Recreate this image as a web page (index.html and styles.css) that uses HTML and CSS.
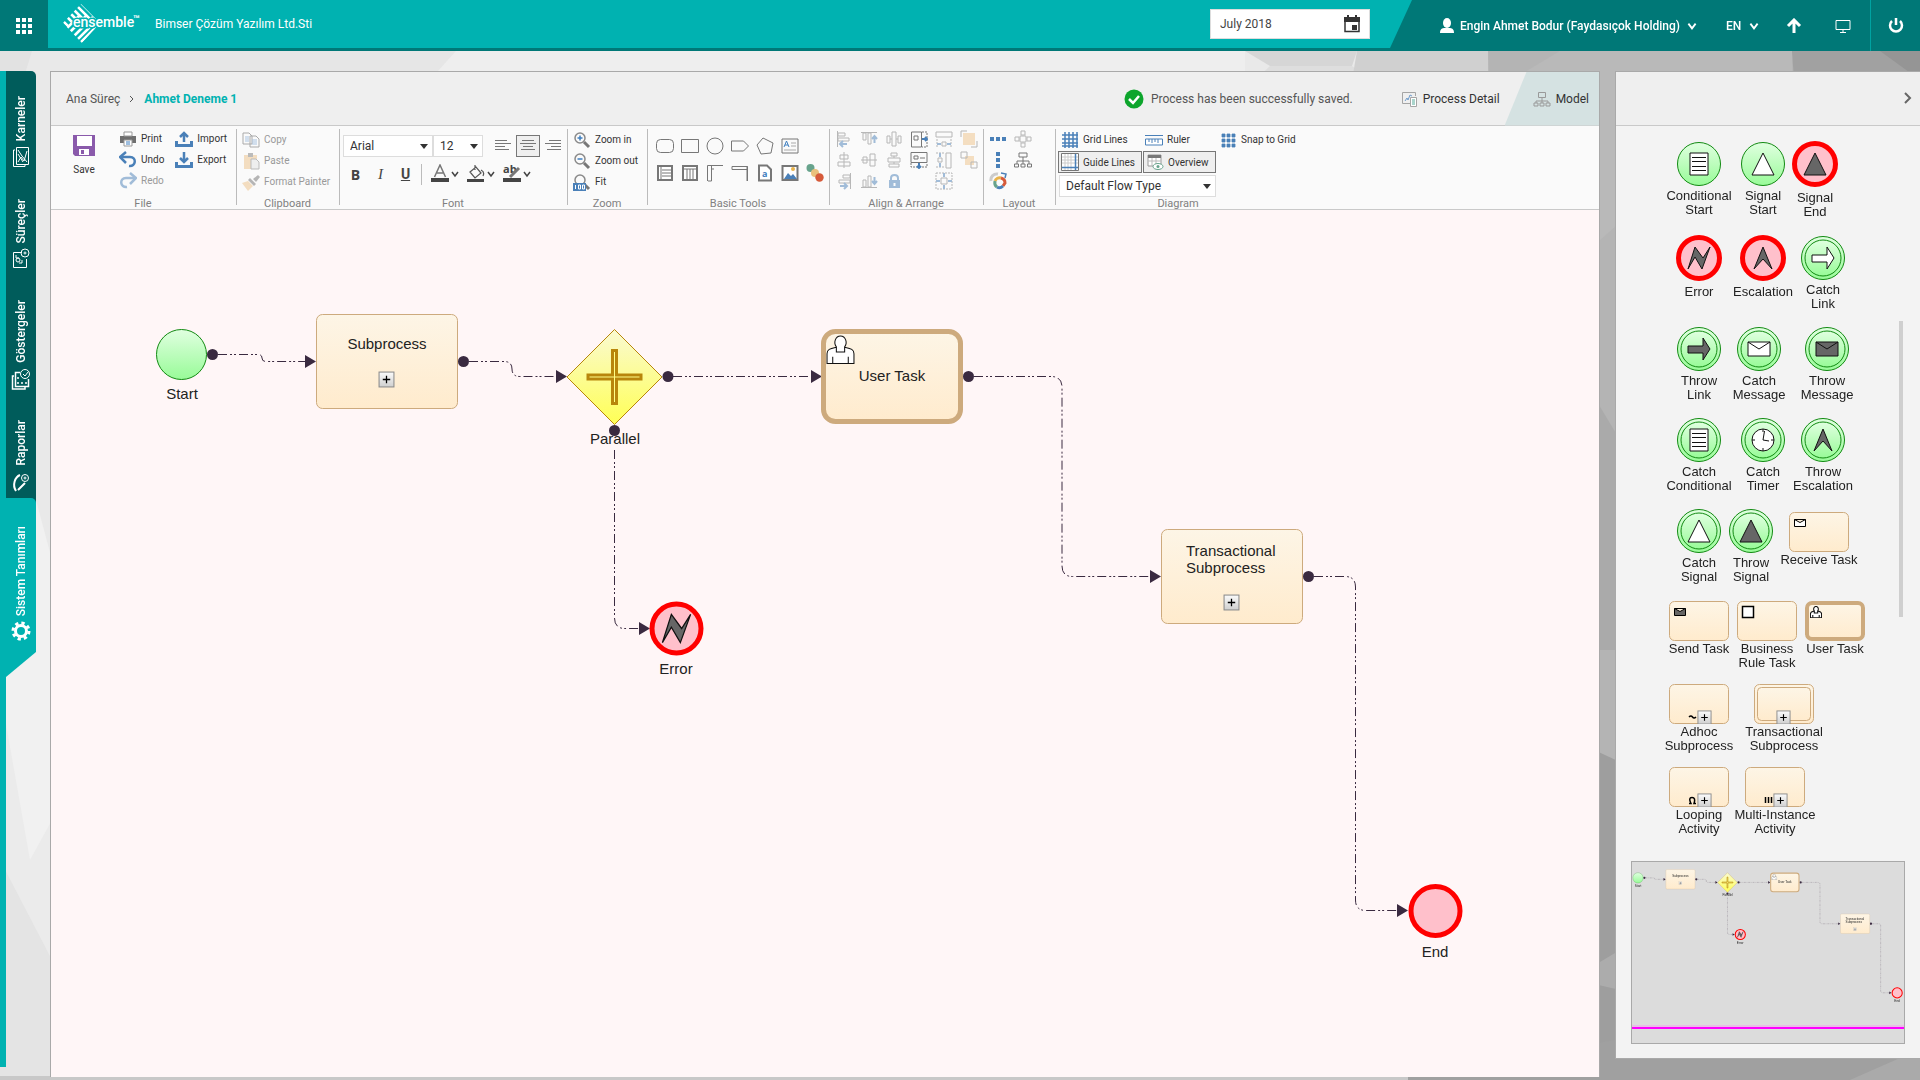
FILE: index.html
```html
<!DOCTYPE html>
<html lang="en">
<head>
    <meta charset="UTF-8">
    <meta name="viewport" content="width=device-width, initial-scale=1.0">
    <title>Ahmet Deneme 1 - Model</title>
    <link rel="stylesheet" href="styles.css">
</head>
<body>

    <!-- low poly backdrop -->
    <svg class="backdrop" viewBox="0 0 1920 1080" preserveAspectRatio="none" aria-hidden="true">
        <rect width="1920" height="1080" fill="#e9e9e9"/>
        <path d="M0 51H32L20 90 0 100z" fill="#e2e2e2"/>
        <path d="M160 51H456L430 80H160z" fill="#e6e6e6"/>
        <path d="M456 51H1245V80H430z" fill="#eeeeee"/>
        <path d="M36 500L52 560V1080H0V640z" fill="#f1f1f1"/>
        <path d="M0 690L30 860 52 820V1080H0z" fill="#ebebeb"/>
        <path d="M0 860L52 960V1080H0z" fill="#e4e4e4"/>
        <path d="M1245 51H1357L1352 66 1270 66z" fill="#d6d6d6"/>
        <path d="M1270 66H1352L1370 80H1255z" fill="#dedede"/>
        <path d="M1357 51H1488L1492 80H1352z" fill="#d0d0d0"/>
        <path d="M1488 51H1920V1080H1500z" fill="#b4b4b4"/>
        <path d="M1560 51H1792V71L1600 240 1525 72z" fill="#b9b9b9"/>
        <path d="M1792 51H1920V80H1794z" fill="#a1a1a1"/>
        <path d="M1880 51H1920V80z" fill="#959595"/>
        <path d="M1590 390L1620 440V650H1590z" fill="#aaaaaa"/>
        <path d="M1590 748L1620 762V1080H1590z" fill="#9e9e9e"/>
        <path d="M1590 968L1620 950V990L1590 983z" fill="#acacac"/>
        <path d="M0 1076H1408V1080H0z" fill="#c8c8c8"/>
        <path d="M1408 1076L1615 1040H1920V1080H1408z" fill="#a0a0a0"/>
        <path d="M1850 1080L1900 1058H1920V1080z" fill="#aaaaaa"/>
    </svg>

    <!-- shared symbols -->
    <svg class="sprite" aria-hidden="true">
        <defs>
            <linearGradient id="green" x1="0" y1="0" x2="0" y2="1"><stop offset="0" stop-color="#e0ffe0"/><stop offset="1" stop-color="#98fb98"/></linearGradient>
            <linearGradient id="cream" x1="0" y1="0" x2="0" y2="1"><stop offset="0" stop-color="#fdf5e6"/><stop offset="1" stop-color="#ffebcd"/></linearGradient>
            <linearGradient id="yellow" x1="0" y1="0" x2="0" y2="1"><stop offset="0" stop-color="#fafad2"/><stop offset="1" stop-color="#ffff55"/></linearGradient>
            <linearGradient id="silver" x1="0" y1="0" x2="0" y2="1"><stop offset="0" stop-color="#fbfbfb"/><stop offset="1" stop-color="#cfcfcf"/></linearGradient>
            <clipPath id="diamond"><path d="M18 0L37 19 19 39 0 19z"/></clipPath>
        </defs>

        <symbol id="chevron" viewBox="0 0 10 10"><path d="M2 3l3 4 3-4" fill="none" stroke="currentColor" stroke-width="1.500"/></symbol>

        <symbol id="start" viewBox="0 0 46 46"><circle cx="23" cy="23" r="21.5" class="ring"/></symbol>
        <symbol id="middle" viewBox="0 0 46 46"><circle cx="23" cy="23" r="21.5" class="ring"/><circle cx="23" cy="23" r="18" class="ring"/></symbol>
        <symbol id="end" viewBox="0 0 46 46"><circle cx="23" cy="23" r="20.5" class="ring-end"/></symbol>
        <symbol id="g-page" viewBox="0 0 46 46"><path d="M14 12h18v22H14z"/><path d="M16 16.500h14M16 20.500h14M16 25.500h14M16 29.500h14"/></symbol>
        <symbol id="g-triangle" viewBox="0 0 46 46"><path d="M23 12l11 22H12z"/></symbol>
        <symbol id="g-bolt" viewBox="0 0 46 46"><path d="M12 34l7-22 8 11 7-11-8 22-7-12z"/></symbol>
        <symbol id="g-escalation" viewBox="0 0 46 46"><path d="M23 12l9 22-9-10-9 10z"/></symbol>
        <symbol id="g-arrow" viewBox="0 0 46 46"><path d="M12 20h15v-8l7 11-7 11v-7H12z"/></symbol>
        <symbol id="g-mail" viewBox="0 0 46 46"><path d="M12 16h22v14H12z"/><path d="M12 16l11 7 11-7" fill="none"/></symbol>
        <symbol id="g-clock" viewBox="0 0 46 46"><circle cx="23" cy="23" r="11"/><path d="M23 12v3M23 31v3M12 23h3M31 23h3M24.500 14L23 23l6 1" fill="none"/></symbol>
        <symbol id="box" viewBox="0 0 60 40"><rect x=".5" y=".5" width="59" height="39" rx="5" class="task"/></symbol>
        <symbol id="person" viewBox="0 0 28 28"><path d="M9 12C4 13 1 14 1 18V27.500H27V18c0-4-3-5-8-6z"/><path d="M10 16.500h8v-5c3-4 1-10.500-4-10.500s-7 6.500-4 10.500z"/><path d="M6.500 21v6M21.500 21v6" fill="none"/></symbol>
        <symbol id="plus" viewBox="0 0 16 16"><rect x="1" y="1" width="14" height="14" fill="url(#silver)" stroke="#8c8c8c"/><path d="M8 4.500v7M4.500 8h7" stroke="#000" stroke-width="1.200"/></symbol>

        <symbol id="save" viewBox="0 0 22 22"><path d="M0 1h22v21H2l-2-2z" fill="#8a5aab"/><path d="M4 2h15v10H4zM6 15h10v6H6z" fill="#fff"/><path d="M8 16h3v4H8z" fill="#8a5aab"/></symbol>
        <symbol id="print" viewBox="0 0 18 18"><path d="M1 6h16v7H1z" fill="#6f6f6f"/><path d="M5 2h8v4H5zM5 10h8v6H5z" fill="#fff" stroke="#9a9a9a"/><path d="M7 12h4M7 14h4" stroke="#3f7fc0"/></symbol>
        <symbol id="undo" viewBox="0 0 18 18"><path d="M2 6h9c7 0 6 10-1 9" fill="none" stroke="#4a80b8" stroke-width="2.500"/><path d="M7 1L1 6l6 6" fill="none" stroke="#4a80b8" stroke-width="2.500"/></symbol>
        <symbol id="import" viewBox="0 0 18 18"><path d="M1.500 11v4.500h15V11" fill="none" stroke="#4a80b8" stroke-width="3"/><path d="M9 12V3M5 7l4-4 4 4" fill="none" stroke="#4a80b8" stroke-width="2.500"/></symbol>
        <symbol id="export" viewBox="0 0 18 18"><path d="M1.500 11v4.500h15V11" fill="none" stroke="#4a80b8" stroke-width="3"/><path d="M9 1v10M5 7l4 4 4-4" fill="none" stroke="#4a80b8" stroke-width="2.500"/></symbol>
        <symbol id="copy" viewBox="0 0 18 18"><path d="M1 2h6l3 3v8H1zM8 5h6l3 3v8H8z" fill="#fafafa" stroke="#aaa"/><path d="M3 6h4M3 8h4M3 10h4M10 9h5M10 11h5M10 13h5" stroke="#a9c3e0"/></symbol>
        <symbol id="paste" viewBox="0 0 18 18"><path d="M2 3h13v14H2z" fill="#f3ddc0"/><path d="M6 1h5v4H6z" fill="#bbb"/><path d="M9 7h5l3 3v7H9z" fill="#eee" stroke="#bbb"/></symbol>
        <symbol id="painter" viewBox="0 0 18 18"><path d="M0 10l6-2 5 5-5 5z" fill="#f3ddc0"/><path d="M6 7l2-2 6 6-2 2z" fill="#b5b5b5"/><path d="M11 6l5-4 2 2-4 5z" fill="#b5b5b5"/></symbol>
        <symbol id="lens" viewBox="0 0 18 18"><circle cx="7" cy="7" r="5" fill="none" stroke="#8a8a8a" stroke-width="1.500"/><path d="M11 11l5 5" stroke="#777" stroke-width="3"/></symbol>
    </svg>

    <header class="topbar">
        <button class="apps-btn" aria-label="Applications">
            <svg width="18" height="18" fill="#fff"><path d="M1 1h4v4H1zM7 1h4v4H7zM13 1h4v4h-4zM1 7h4v4H1zM7 7h4v4H7zM13 7h4v4h-4zM1 13h4v4H1zM7 13h4v4H7zM13 13h4v4h-4z"/></svg>
        </button>
        <a class="logo" href="#" aria-label="ensemble">
            <svg width="80" height="40">
                <g clip-path="url(#diamond)" stroke="#fff" stroke-width="2.500" fill="none">
                    <path d="M-4 13l24 24M0 9l24 24M3 5l24 24M7 2l24 24M10-2l24 24M14-5l24 24M18-8l24 24"/>
                </g>
                <g clip-path="url(#diamond)"><path d="M2 22h40v17H2z" fill="#00b2b1"/><path d="M0 28l16-16M3 32L23 12M7 36L30 13M11 39L36 14M14 42L40 16M18 46L44 20" stroke="#fff" stroke-width="2.500"/></g>
                <text x="10" y="23" class="logo-text">ensemble</text>
                <text x="70" y="19" class="logo-tm">™</text>
            </svg>
        </a>
        <span class="company">Bimser Çözüm Yazılım Ltd.Sti</span>
        <div class="date-box">
            <input type="text" value="July 2018" aria-label="Period">
            <button aria-label="Open calendar"><svg width="18" height="18"><path d="M2 3h14v13.500H2z" fill="none" stroke="#333" stroke-width="1.500"/><path d="M1 2h16v5H1zM4 0h2v3H4zM12 0h2v3h-2zM9 10h5v5H9z" fill="#333"/></svg></button>
        </div>
        <nav class="user-nav">
            <a href="#" class="user-link">
                <svg width="14" height="16" fill="#fff"><ellipse cx="7" cy="5" rx="4" ry="5"/><path d="M0 15c0-4 2-5 5-5h4c3 0 5 1 5 5z"/></svg>
                Engin Ahmet Bodur (Faydasıçok Holding)
                <svg width="12" height="12"><use href="#chevron"/></svg>
            </a>
            <a href="#" class="lang-link">EN <svg width="12" height="12"><use href="#chevron"/></svg></a>
            <a href="#" class="icon-link" aria-label="Upload"><svg width="16" height="16"><path d="M8 15V3M2 8l6-6 6 6" fill="none" stroke="#fff" stroke-width="3"/></svg></a>
            <a href="#" class="icon-link" aria-label="Screen"><svg width="16" height="16"><path d="M1 2.500h14v9H1zM8 12v2M5 14.500h6" fill="none" stroke="#fff"/></svg></a>
            <a href="#" class="power-link" aria-label="Log out"><svg width="18" height="18"><path d="M5 4a6 6 0 1 0 8 0M9 1v7" fill="none" stroke="#fff" stroke-width="2.500"/></svg></a>
        </nav>
    </header>

    <div class="page">
        <nav class="side">
            <a href="#" class="side-tab tab-kar"><span>Karneler</span>
                <svg width="18" height="22" fill="none" stroke="#fff"><path d="M4.500 1.500h12v17h-12zM3 4H1.500v16.500H13V19M6 16l3-5 3 4 3-10M6 4l4 6 5 6M6 8l5 8"/></svg></a>
            <a href="#" class="side-tab tab-sur"><span>Süreçler</span>
                <svg width="18" height="22" fill="none" stroke="#fff"><path d="M10 4.500H1.500v15h13V11M4 7v3h3M7 15h3v-3"/><circle cx="6" cy="12" r="2"/><circle cx="13" cy="5" r="4"/><circle cx="13" cy="5" r="1"/></svg></a>
            <a href="#" class="side-tab tab-gos"><span>Göstergeler</span>
                <svg width="20" height="22" fill="none" stroke="#fff"><path d="M9 4.500H4.500v14h13V11M3 8H1.500v13H14v-2M7 9v2M7 14v2M10 15h2M14 15h2" stroke-width="1.500"/><circle cx="14" cy="6" r="4.500"/><path d="M12 6l2 2 3-4"/></svg></a>
            <a href="#" class="side-tab tab-rap"><span>Raporlar</span>
                <svg width="18" height="22" fill="none" stroke="#fff"><path d="M4 20C0 14 3 6 8 4M6 19l7-7" stroke-width="2"/><circle cx="13" cy="7" r="3.500"/><circle cx="13" cy="7" r="1"/></svg></a>
            <a href="#" class="side-tab tab-sis"><span>Sistem Tanımları</span>
                <svg width="20" height="20"><circle cx="10" cy="10" r="8" fill="none" stroke="#fff" stroke-width="3" stroke-dasharray="3.300 3"/><circle cx="10" cy="10" r="5.500" fill="none" stroke="#fff" stroke-width="3"/></svg></a>
        </nav>

        <main class="workspace">
            <div class="panel-head">
                <a href="#" class="crumb">Ana Süreç</a>
                <svg class="crumb-sep" width="8" height="10"><path d="M2 2l3 3-3 3" fill="none" stroke="#555"/></svg>
                <b class="crumb-current">Ahmet Deneme 1</b>
                <span class="saved">
                    <svg width="20" height="20"><circle cx="10" cy="10" r="9.500" fill="#0da52c"/><path d="M5 10l4 4 6-7" fill="none" stroke="#fff" stroke-width="2.500"/></svg>
                    Process has been successfully saved.
                </span>
                <a href="#" class="head-tab">
                    <svg width="16" height="16" fill="none" stroke="#a5a5a5"><path d="M9 12.500H.500V1.500h13V5"/><path d="M8.500 6.500h6v9h-6z" fill="#fff"/><path d="M3 10l2-3 1 2 2-5 2 1" stroke="#6f9ccc"/><path d="M10 9h3M10 11h3M10 13h3" stroke="#5a9"/></svg>
                    Process Detail
                </a>
                <a href="#" class="head-tab head-tab-on">
                    <svg width="18" height="16" fill="none" stroke="#999"><path d="M5.500 1.500h7v5h-7zM9 7v3M3 12v-2h12v2M9 10v2M1 12h4v3H1zM7 12h4v3H7zM13 12h4v3h-4z"/></svg>
                    Model
                </a>
            </div>

            <div class="toolbar">
                <section class="group">
                    <div class="group-body group-file">
                        <button class="save-btn"><svg width="22" height="22"><use href="#save"/></svg>Save</button>
                        <div class="cmds">
                            <button class="cmd"><svg><use href="#print"/></svg>Print</button>
                            <button class="cmd"><svg><use href="#undo"/></svg>Undo</button>
                            <button class="cmd off"><svg class="flip"><use href="#undo"/></svg>Redo</button>
                        </div>
                        <div class="cmds">
                            <button class="cmd"><svg><use href="#import"/></svg>Import</button>
                            <button class="cmd"><svg><use href="#export"/></svg>Export</button>
                        </div>
                    </div>
                    <h2>File</h2>
                </section>

                <section class="group">
                    <div class="group-body cmds group-clip">
                        <button class="cmd faint" disabled><svg><use href="#copy"/></svg>Copy</button>
                        <button class="cmd faint" disabled><svg><use href="#paste"/></svg>Paste</button>
                        <button class="cmd faint" disabled><svg><use href="#painter"/></svg>Format Painter</button>
                    </div>
                    <h2>Clipboard</h2>
                </section>

                <section class="group">
                    <div class="group-body group-font">
                        <div class="font-row">
                            <span class="pick pick-font"><select aria-label="Font"><option>Arial</option></select></span>
                            <span class="pick pick-size"><select aria-label="Font size"><option>12</option></select></span>
                            <button class="align-btn" aria-label="Align left"><svg width="18" height="16" stroke="#777"><path d="M1 2.500h12M1 5.500h16M1 8.500h10M1 11.500h14"/></svg></button>
                            <button class="align-btn align-on" aria-label="Align center"><svg width="18" height="16" stroke="#777"><path d="M3 2.500h12M1 5.500h16M4 8.500h10M2 11.500h14"/></svg></button>
                            <button class="align-btn" aria-label="Align right"><svg width="18" height="16" stroke="#777"><path d="M5 2.500h12M1 5.500h16M7 8.500h10M3 11.500h14"/></svg></button>
                        </div>
                        <div class="style-row">
                            <button class="style-btn"><b>B</b></button>
                            <button class="style-btn"><i>I</i></button>
                            <button class="style-btn"><u>U</u></button>
                            <span class="rule"></span>
                            <button class="color-btn" aria-label="Text color"><svg width="18" height="20"><path d="M3.500 13L9 1l5.500 12M6 9h6" fill="none" stroke="#777" stroke-width="1.500"/><path d="M0 14h18v4H0z" fill="#444"/></svg><svg width="10" height="10"><use href="#chevron"/></svg></button>
                            <button class="color-btn" aria-label="Fill color"><svg width="18" height="20"><path d="M3 8l6-5 5 6-6 5zM8 6V1M14 6q4 2 2 6" fill="none" stroke="#555" stroke-width="1.200"/><path d="M0 15h17v3H0z" fill="#444"/></svg><svg width="10" height="10"><use href="#chevron"/></svg></button>
                            <button class="color-btn" aria-label="Highlight"><svg width="18" height="20"><text x="0" y="9" class="ab">ab</text><path d="M7 13l9-9" stroke="#777" stroke-width="3"/><path d="M0 14h18v4H0z" fill="#444"/></svg><svg width="10" height="10"><use href="#chevron"/></svg></button>
                        </div>
                    </div>
                    <h2>Font</h2>
                </section>

                <section class="group">
                    <div class="group-body cmds group-zoom">
                        <button class="cmd"><svg viewBox="0 0 18 18"><use href="#lens"/><path d="M7 4.500v5M4.500 7h5" stroke="#3f7fc0" stroke-width="1.500"/></svg>Zoom in</button>
                        <button class="cmd"><svg viewBox="0 0 18 18"><use href="#lens"/><path d="M4.500 7h5" stroke="#3f7fc0" stroke-width="1.500"/></svg>Zoom out</button>
                        <button class="cmd"><svg viewBox="0 0 18 18"><use href="#lens"/><path d="M0 10h13v8H0z" fill="#4a80b8"/><path d="M2.500 12v4M5.500 12h2v4h-2zM9.500 12h2v4h-2z" stroke="#fff" fill="none"/></svg>Fit</button>
                    </div>
                    <h2>Zoom</h2>
                </section>

                <section class="group">
                    <div class="group-body tools">
                        <button aria-label="Rounded rectangle"><svg viewBox="0 0 18 18"><rect x=".5" y="2.500" width="17" height="13" rx="4" class="line"/></svg></button>
                        <button aria-label="Rectangle"><svg viewBox="0 0 18 18"><path d="M.5 2.500h17v13H.5z" class="line"/></svg></button>
                        <button aria-label="Circle"><svg viewBox="0 0 18 18"><circle cx="9" cy="9" r="8" class="line"/></svg></button>
                        <button aria-label="Tag"><svg viewBox="0 0 18 18"><path d="M.5 4h12l5 5-5 5H.5z" class="line"/></svg></button>
                        <button aria-label="Pentagon"><svg viewBox="0 0 18 18"><path d="M7 1l10 5-2 10-10 1L1 8z" class="line"/></svg></button>
                        <button aria-label="Text"><svg viewBox="0 0 18 18"><path d="M1 2h16v14H1z" class="line"/><path d="M3 10l2.500-6L8 10M4 8h3" stroke="#3f7fc0" fill="none"/><path d="M10 6h5M10 9h5M3 13h12" stroke="#aaa"/></svg></button>
                        <span></span>
                        <button aria-label="Horizontal pool"><svg viewBox="0 0 18 18"><path d="M2 2h14v14H2z" class="bold"/><path d="M5 2v14M6 6h10M6 9h10M6 12h10" class="line"/></svg></button>
                        <button aria-label="Vertical pool"><svg viewBox="0 0 18 18"><path d="M2 2h14v14H2z" class="bold"/><path d="M2 5h14M6 5v11M9 5v11M12 5v11" class="line"/></svg></button>
                        <button aria-label="Vertical lane"><svg viewBox="0 0 18 18"><path d="M17 1.500H1.500V17M5.500 2v15H2M5 5h3" class="line"/></svg></button>
                        <button aria-label="Horizontal lane"><svg viewBox="0 0 18 18"><path d="M16.500 17V2.500H1v3h15M16 2v15" class="line"/></svg></button>
                        <button aria-label="Document"><svg viewBox="0 0 18 18"><path d="M3 1.500h8l4 4v11H3z" class="bold"/><text x="6" y="13" class="doc-a">a</text></svg></button>
                        <button aria-label="Image"><svg viewBox="0 0 18 18"><path d="M1.500 2h15v14h-15z" class="bold"/><path d="M3 15l4-6 3 3 2-2 4 5z" fill="#4a80b8"/><circle cx="12" cy="5" r="2" fill="#e9b44c"/></svg></button>
                        <button aria-label="Colors"><svg viewBox="0 0 18 18"><circle cx="4.500" cy="4" r="4" fill="#67a38c"/><circle cx="9" cy="9" r="4" fill="#e9c17c"/><circle cx="13.500" cy="13.500" r="4.200" fill="#d65a3a"/></svg></button>
                    </div>
                    <h2>Basic Tools</h2>
                </section>

                <section class="group">
                    <div class="group-body arrange">
                        <button class="off" aria-label="Align lefts"><svg viewBox="0 0 18 18"><path d="M2.500 1v16M3 3h7v3H3zM3 8h11v3H3z" class="line"/><path d="M12 14H5M8 11l-3 3 3 3" class="blue"/></svg></button>
                        <button class="off" aria-label="Align tops"><svg viewBox="0 0 18 18"><path d="M1 2.500h16M3 3h3v7H3zM8 3h3v11H8z" class="line"/><path d="M14.500 13V6M12 9l2.500-3L17 9" class="blue"/></svg></button>
                        <button class="off" aria-label="Distribute across"><svg viewBox="0 0 18 18"><path d="M2 6h3v7H2zM7 2h4v14H7zM13 6h3v7h-3zM5 9h2M11 9h2" class="line"/></svg></button>
                        <button aria-label="Same width"><svg viewBox="0 0 18 18"><path d="M1.500 2h10v15h-10zM4 6h4v4H4z" class="line"/><path d="M12 2h5v15h-5" class="dots"/><path d="M12 9h5M15 7l2 2-2 2" class="blue"/></svg></button>
                        <button class="off" aria-label="Space across"><svg viewBox="0 0 18 18"><path d="M1 2h16v5H1z" class="line"/><path d="M2 9v8M16 9v8" class="dots"/><path d="M7 12h4v4H7z" class="line"/><path d="M6 14H2M12 14h4" class="blue"/></svg></button>
                        <button class="off" aria-label="Bring to front"><svg viewBox="0 0 18 18"><path d="M3 3h12v12H3z" fill="#efc48a"/><path d="M1 7V1h6M17 11v6h-6" class="line"/></svg></button>
                        <button class="off" aria-label="Align centers"><svg viewBox="0 0 18 18"><path d="M9 1v16M5 4h8v4H5zM3 11h12v4H3z" class="line"/></svg></button>
                        <button class="off" aria-label="Align middles"><svg viewBox="0 0 18 18"><path d="M1 9h16M3 6h4v6H3zM10 3h5v12h-5z" class="line"/></svg></button>
                        <button class="off" aria-label="Distribute down"><svg viewBox="0 0 18 18"><path d="M6 2h6v3H6zM3 7h12v4H3zM4 13h10v3H4zM9 5v2M9 11v2" class="line"/></svg></button>
                        <button aria-label="Same height"><svg viewBox="0 0 18 18"><path d="M1 1.500h16v10H1zM4 5h4v3H4zM10 7h5" class="line"/><path d="M1 12v4h16v-4" class="dots"/><path d="M9 12v5M7 15l2 2 2-2" class="blue"/></svg></button>
                        <button class="off" aria-label="Space down"><svg viewBox="0 0 18 18"><path d="M11 2h5v15h-5z" class="line"/><path d="M1 2h8M1 16h8" class="dots"/><path d="M3 7h4v4H3z" class="line"/><path d="M5 6V2M5 12v4" class="blue"/></svg></button>
                        <button class="off" aria-label="Send to back"><svg viewBox="0 0 18 18"><path d="M5 5h9v9H5z" fill="#efc48a"/><path d="M1 1h6v6H1zM11 11h6v6h-6z" class="line"/></svg></button>
                        <button class="off" aria-label="Align rights"><svg viewBox="0 0 18 18"><path d="M15.500 1v16M8 3h7v3H8zM4 8h11v3H4z" class="line"/><path d="M5 14h7M9 11l3 3-3 3" class="blue"/></svg></button>
                        <button class="off" aria-label="Align bottoms"><svg viewBox="0 0 18 18"><path d="M1 15.500h16M3 8h3v7H3zM8 4h3v11H8z" class="line"/><path d="M14.500 5v7M12 9l2.500 3L17 9" class="blue"/></svg></button>
                        <button class="off" aria-label="Lock"><svg viewBox="0 0 18 18"><path d="M4 8h11v8H4z" fill="#4a80b8"/><path d="M6 8V6q0-3 3.500-3T13 6v2" fill="none" stroke="#4a80b8" stroke-width="2"/><path d="M9.500 11v3" stroke="#fff" stroke-width="2"/></svg></button>
                        <span></span>
                        <button class="off" aria-label="Resize"><svg viewBox="0 0 18 18"><path d="M1 1h16v16H1z" class="dots"/><path d="M6 6h6v6H6z" class="line"/><path d="M9 5V1M9 13v4M5 9H1M13 9h4" class="blue"/></svg></button>
                    </div>
                    <h2>Align &amp; Arrange</h2>
                </section>

                <section class="group">
                    <div class="group-body layouts">
                        <button aria-label="Horizontal layout"><svg viewBox="0 0 18 18"><path d="M1 7h4v4H1zM7 7h4v4H7zM13 7h4v4h-4z" fill="#4a80b8"/></svg></button>
                        <button class="off" aria-label="Radial layout"><svg viewBox="0 0 18 18"><path d="M7 1h4v4H7zM7 13h4v4H7zM1 7h4v4H1zM13 7h4v4h-4zM6 6h6v6H6z" class="line"/></svg></button>
                        <button aria-label="Vertical layout"><svg viewBox="0 0 18 18"><path d="M7 1h4v4H7zM7 7h4v4H7zM7 13h4v4H7z" fill="#4a80b8"/></svg></button>
                        <button aria-label="Tree layout"><svg viewBox="0 0 18 18"><path d="M5 2h8v4H5zM9 6v4M3 13v-3h12v3M9 10v3M.500 13h4v3h-4zM7 13h4v3H7zM13.500 13h4v3h-4z" class="line"/></svg></button>
                        <button aria-label="Circular layout"><svg viewBox="0 0 18 18" fill="none" stroke-width="3"><path d="M2 9a6 6 0 0 1 7-7" stroke="#ccc"/><path d="M6 9a5 5 0 0 1 6-3" stroke="#e9b44c"/><path d="M12 6q4 1 4 5l-2 3" stroke="#d65a3a"/><path d="M14 14q-3 3-6 1" stroke="#4a80b8"/><path d="M8 15q-3-2-2-6" stroke="#67a38c"/><path d="M12 1l5 1-1 4" stroke="#4a80b8" stroke-width="1.500"/></svg></button>
                    </div>
                    <h2>Layout</h2>
                </section>

                <section class="group">
                    <div class="group-body group-diagram">
                        <div class="diagram-row">
                            <button class="cmd cmd-grid"><svg viewBox="0 0 18 18"><path d="M4 1v16M8 1v16M12 1v16M16 1v16M1 4h16M1 8h16M1 12h16M1 15h16" stroke="#4a80b8" stroke-width="1.500"/></svg>Grid Lines</button>
                            <button class="cmd cmd-ruler"><svg viewBox="0 0 18 18"><path d="M0 4.500h18" stroke="#4a80b8"/><path d="M.5 8h17v6H.5z" fill="#fff" stroke="#4a80b8"/><path d="M4 8v3M7 8v4M10 8v3M13 8v4" stroke="#4a80b8"/></svg>Ruler</button>
                            <button class="cmd"><svg viewBox="0 0 18 18"><path d="M3 3h3v3H3zM8 3h3v3H8zM13 3h3v3h-3zM3 8h3v3H3zM8 8h3v3H8zM13 8h3v3h-3zM3 13h3v3H3zM8 13h3v3H8zM13 13h3v3h-3z" fill="#4a80b8" stroke="#4a80b8" stroke-width=".8"/></svg>Snap to Grid</button>
                        </div>
                        <div class="diagram-row">
                            <button class="cmd cmd-on cmd-guide"><svg viewBox="0 0 18 18"><path d="M.5.500h17v17H.5z" fill="#fff" stroke="#777"/><path d="M4 1v16M7 1v16M10 1v16M1 4h16M1 7h16M1 10h16" stroke="#ccc"/><path d="M14.500 1v16M1 14.500h16" stroke="#4a80b8" stroke-width="1.500"/></svg>Guide Lines</button>
                            <button class="cmd cmd-on"><svg viewBox="0 0 18 18"><path d="M2 2h13v11H2z" fill="#fff" stroke="#999"/><path d="M2 2h13v3H2z" fill="#777"/><path d="M6 5v8M10 5v8M2 8h13" stroke="#bbb"/><ellipse cx="12" cy="13.500" rx="5" ry="3" fill="#fff" stroke="#67a38c"/><circle cx="12" cy="13.500" r="1.500" fill="#67a38c"/></svg>Overview</button>
                        </div>
                        <span class="pick pick-flow"><select aria-label="Flow type"><option>Default Flow Type</option></select></span>
                    </div>
                    <h2>Diagram</h2>
                </section>
            </div>

            <div class="canvas">
                <svg width="100%" height="100%">
                    <!-- drawn here and again, scaled down, in the overview -->
                    <g id="diagram">
                        <g class="link">
                            <path d="M167 144.500H207q4 0 4 3.500t4 3.500H256"/>
                            <path d="M418 151.500H453q8 0 8 7.500t8 7.500H506"/>
                            <path d="M622 166.500H761"/>
                            <path d="M563.500 240V408q0 10.500 10.500 10.500H589"/>
                            <path d="M923 166.500H1000q11 0 11 10.500V356q0 10.500 10.500 10.500H1100"/>
                            <path d="M1263 366.500H1294q10.500 0 10.500 10.500V690q0 10.500 10.500 10.500H1347"/>
                        </g>
                        <g class="tip">
                            <path d="M254 145l11 6.500-11 6.500zM505 160l11 6.500-11 6.500zM760 160l11 6.500-11 6.500zM588 412l11 6.500-11 6.500zM1099 360l11 6.500-11 6.500zM1346 694l11 6.500-11 6.500z"/>
                            <circle cx="161.500" cy="144.500" r="5.500"/>
                            <circle cx="412.500" cy="151.500" r="5.500"/>
                            <circle cx="617" cy="166.500" r="5.500"/>
                            <circle cx="563.500" cy="220.500" r="5.500"/>
                            <circle cx="917.500" cy="166.500" r="5.500"/>
                            <circle cx="1257.500" cy="366.500" r="5.500"/>
                        </g>
                        <circle cx="130.500" cy="144.500" r="25" class="ring"/>
                        <text x="131" y="189" class="node-text">Start</text>
                        <rect x="265.500" y="104.500" width="141" height="94" rx="6" class="task"/>
                        <text x="336" y="139" class="node-text">Subprocess</text>
                        <use href="#plus" x="327" y="161" width="17" height="17"/>
                        <path d="M516 167l47.500-47.500L611 167l-47.500 47.500z" fill="url(#yellow)" stroke="#b8860b"/>
                        <path d="M561.500 140.500h4v24.500h24.500v4h-24.500v24.500h-4v-24.500H537v-4h24.500z" fill="#ffff88" stroke="#b8860b" stroke-width="3"/>
                        <text x="564" y="234" class="node-text">Parallel</text>
                        <rect x="772.500" y="121.500" width="137" height="90" rx="12" class="task-user"/>
                        <g class="glyph-light"><use href="#person" x="775" y="125" width="29" height="29"/></g>
                        <text x="841" y="171" class="node-text">User Task</text>
                        <circle cx="625.500" cy="418.500" r="24.500" class="ring-end"/>
                        <g class="glyph-dark"><use href="#g-bolt" x="596" y="389" width="59" height="59"/></g>
                        <text x="625" y="464" class="node-text">Error</text>
                        <rect x="1110.500" y="319.500" width="141" height="94" rx="6" class="task"/>
                        <text x="1135" y="346" class="node-text node-text-left">Transactional</text>
                        <text x="1135" y="363" class="node-text node-text-left">Subprocess</text>
                        <use href="#plus" x="1172" y="384" width="17" height="17"/>
                        <circle cx="1384.500" cy="701" r="24.500" class="ring-end"/>
                        <text x="1384" y="747" class="node-text">End</text>
                    </g>
                </svg>
            </div>
        </main>

        <aside class="palette-panel">
            <div class="palette-head">
                <button aria-label="Collapse panel"><svg width="10" height="14"><path d="M2 1l5 5-5 5" fill="none" stroke="#666" stroke-width="2"/></svg></button>
            </div>
            <div class="palette">
                <div class="palette-events">
                    <div class="shapes cols-60-44">
                        <button class="shape"><svg><use href="#start"/><use href="#g-page" class="glyph-light"/></svg>Conditional<br>Start</button>
                        <button class="shape"><svg><use href="#start"/><use href="#g-triangle" class="glyph-light"/></svg>Signal<br>Start</button>
                        <button class="shape shape-end"><svg><use href="#end"/><use href="#g-triangle" class="glyph-dark"/></svg>Signal<br>End</button>
                    </div>
                    <div class="shapes cols-60-60">
                        <button class="shape shape-end"><svg><use href="#end"/><use href="#g-bolt" class="glyph-dark"/></svg>Error</button>
                        <button class="shape shape-end"><svg><use href="#end"/><use href="#g-escalation" class="glyph-dark"/></svg>Escalation</button>
                        <button class="shape"><svg><use href="#middle"/><use href="#g-arrow" class="glyph-light"/></svg>Catch<br>Link</button>
                    </div>
                    <div class="shapes cols-52-84">
                        <button class="shape"><svg><use href="#middle"/><use href="#g-arrow" class="glyph-dark"/></svg>Throw<br>Link</button>
                        <button class="shape"><svg><use href="#middle"/><use href="#g-mail" class="glyph-light"/></svg>Catch<br>Message</button>
                        <button class="shape"><svg><use href="#middle"/><use href="#g-mail" class="glyph-dark"/></svg>Throw<br>Message</button>
                    </div>
                    <div class="shapes cols-60-60">
                        <button class="shape"><svg><use href="#middle"/><use href="#g-page" class="glyph-light"/></svg>Catch<br>Conditional</button>
                        <button class="shape"><svg><use href="#middle"/><use href="#g-clock" class="glyph-light"/></svg>Catch<br>Timer</button>
                        <button class="shape"><svg><use href="#middle"/><use href="#g-escalation" class="glyph-dark"/></svg>Throw<br>Escalation</button>
                    </div>
                    <div class="shapes cols-36-100">
                        <button class="shape"><svg><use href="#middle"/><use href="#g-triangle" class="glyph-light"/></svg>Catch<br>Signal</button>
                        <button class="shape"><svg><use href="#middle"/><use href="#g-triangle" class="glyph-dark"/></svg>Throw<br>Signal</button>
                        <button class="shape shape-task shape-receive"><svg><use href="#box"/><path d="M5.500 7.500h11v7h-11zM5.500 7.500l5.500 3 5.500-3" fill="#fff" stroke="#000"/></svg>Receive Task</button>
                    </div>
                </div>
                <div class="palette-tasks">
                    <div class="shapes cols-68-68">
                        <button class="shape shape-task"><svg><use href="#box"/><path d="M5.500 7.500h11v7h-11zM5.500 7.500l5.500 3 5.500-3" fill="#666" stroke="#000"/></svg>Send Task</button>
                        <button class="shape shape-task"><svg><use href="#box"/><path d="M5.500 5.500h11v11h-11z" fill="#fff" stroke="#000" stroke-width="1.500"/></svg>Business<br>Rule Task</button>
                        <button class="shape shape-task"><svg><rect x="2" y="2" width="56" height="36" rx="5" class="task-user"/><g class="glyph-light" stroke-width="2.500"><use href="#person" x="5" y="5" width="12" height="12"/></g></svg>User Task</button>
                    </div>
                    <div class="shapes cols-102">
                        <button class="shape shape-task"><svg><use href="#box"/><path d="M20 33q2-2 3.500 0t3.500 0" fill="none" stroke="#000" stroke-width="1.500"/><use href="#plus" x="28" y="26" width="15" height="15"/></svg>Adhoc<br>Subprocess</button>
                        <button class="shape shape-task"><svg><use href="#box"/><rect x="3.500" y="3.500" width="53" height="33" rx="4" class="task"/><use href="#plus" x="22" y="26" width="15" height="15"/></svg>Transactional<br>Subprocess</button>
                    </div>
                    <div class="shapes cols-84">
                        <button class="shape shape-task"><svg><use href="#box"/><path d="M20 36.500h2q-3-6 1-6t2 6h2" fill="none" stroke="#000" stroke-width="1.500"/><use href="#plus" x="28" y="26" width="15" height="15"/></svg>Looping<br>Activity</button>
                        <button class="shape shape-task"><svg><use href="#box"/><path d="M20.500 30v6M23.500 30v6M26.500 30v6" stroke="#000" stroke-width="1.500"/><use href="#plus" x="28" y="26" width="15" height="15"/></svg>Multi-Instance<br>Activity</button>
                    </div>
                </div>
                <span class="scroll-thumb"></span>
            </div>
            <div class="overview">
                <svg width="100%" height="100%" aria-label="Overview">
                    <use href="#diagram" transform="translate(-21 -14) scale(.2067)"/>
                    <path d="M0 164h272" stroke="#f29cf2" stroke-width="1"/>
                    <path d="M0 166h272" stroke="#f0f" stroke-width="2"/>
                </svg>
            </div>
        </aside>
    </div>

</body>
</html>
```
FILE: styles.css
```css
* {
    box-sizing: border-box;
}
body {
    margin: 0;
    min-height: 100vh;
    display: flex;
    flex-direction: column;
    font-family: Roboto, "Liberation Sans", sans-serif;
    font-size: 12px;
    color: #333;
    overflow: hidden;
}
a {
    color: inherit;
    text-decoration: none;
}
button {
    border: 0;
    padding: 0;
    background: none;
    font: inherit;
    color: inherit;
    cursor: pointer;
}
svg {
    display: block;
    flex: none;
}
.backdrop {
    position: fixed;
    inset: 0;
    width: 100%;
    height: 100%;
    z-index: -1;
}
.sprite {
    position: absolute;
    width: 0;
    height: 0;
}

/* top bar */
.topbar {
    display: flex;
    align-items: center;
    height: 51px;
    background: #00b2b1;
    border-bottom: 3px solid #007877;
    color: #fff;
}
.apps-btn {
    width: 48px;
    height: 51px;
    margin-bottom: -3px;
    display: flex;
    align-items: center;
    justify-content: center;
    background: #007877;
}
.logo {
    margin-left: 15px;
}
.logo-text {
    font: 500 14px Roboto, sans-serif;
    fill: #fff;
    stroke: #00b2b1;
    stroke-width: 3px;
    paint-order: stroke;
}
.logo-tm {
    font: 700 11px Roboto, sans-serif;
    fill: #fff;
}
.company {
    margin-left: 12px;
}
.date-box {
    display: flex;
    align-items: center;
    width: 160px;
    height: 30px;
    margin: 0 20px 0 auto;
    background: #fff;
    border: 1px solid #ddd;
}
.date-box input {
    flex: 1;
    min-width: 0;
    border: 0;
    padding: 0 0 0 9px;
    font: inherit;
    color: #444;
    outline: 0;
}
.date-box button {
    margin-right: 8px;
}
.user-nav {
    display: flex;
    align-items: center;
    align-self: flex-start;
    width: 530px;
    height: 51px;
    flex: none;
    padding-left: 50px;
    background: #007877;
    clip-path: polygon(22px 0, 100% 0, 100% 100%, 0 100%, 0 48px);
    font-weight: 500;
}
.user-link,
.lang-link {
    display: flex;
    align-items: center;
    gap: 6px;
}
.user-link {
    margin-right: 28px;
    white-space: nowrap;
}
.lang-link {
    gap: 7px;
    margin-right: 26px;
}
.icon-link {
    margin-right: 33px;
}
.icon-link + .icon-link {
    margin-right: 0;
}
.power-link {
    display: flex;
    align-items: center;
    justify-content: center;
    width: 50px;
    height: 51px;
    margin-left: auto;
    border-left: 1px solid #00a3a2;
}

/* page columns */
.page {
    flex: 1;
    display: flex;
    padding-top: 20px;
    height: calc(100vh - 51px);
}
.side {
    width: 36px;
    flex: none;
    margin-bottom: 13px;
    padding-left: 6px;
    background:
        linear-gradient(#00b2b1, #00b2b1) no-repeat 0 0 / 6px 100%,
        linear-gradient(#005c5b, #005c5b) no-repeat 6px 5px / 30px 427px;
}
.side-tab {
    display: flex;
    flex-direction: column;
    align-items: center;
    justify-content: flex-end;
    gap: 5px;
    color: #fff;
    font-weight: 500;
}
.side-tab span {
    writing-mode: vertical-rl;
    transform: rotate(180deg);
    line-height: 16px;
}
.tab-kar {
    height: 97px;
    background: #005c5b;
    border-top-right-radius: 5px;
}
.tab-sur {
    height: 102px;
}
.tab-gos {
    height: 120px;
}
.tab-rap {
    height: 103px;
}
.tab-sis {
    height: 179px;
    margin-top: 5px;
    padding-bottom: 36px;
    background: #00b2b1;
    border-top-right-radius: 5px;
    clip-path: polygon(0 0, 100% 0, 100% 154px, 0 100%);
}
.workspace {
    flex: 1;
    min-width: 0;
    display: flex;
    flex-direction: column;
    margin: 0 15px 3px 14px;
    border: 1px solid #a9a9a9;
    border-bottom: 0;
    background: #fff6f7;
}
.panel-head {
    display: flex;
    align-items: center;
    height: 54px;
    flex: none;
    padding-left: 15px;
    background: #efefef;
    border-bottom: 1px solid #c9c9c9;
    color: #555;
}
.crumb-sep {
    margin: 0 8px;
}
.crumb-current {
    color: #00b2b1;
}
.saved {
    display: flex;
    align-items: center;
    gap: 7px;
    margin-left: auto;
    margin-right: 49px;
}
.head-tab {
    display: flex;
    align-items: center;
    gap: 5px;
    color: #333;
}
.head-tab-on {
    height: 54px;
    margin-left: 5px;
    padding: 0 10px 0 28px;
    background: #d5e2e2;
    clip-path: polygon(22px 0, 100% 0, 100% 100%, 0 100%);
}

/* ribbon */
.toolbar {
    display: grid;
    grid-template-columns: 186px 103px 228px 80px 182px 154px 72px 246px;
    height: 84px;
    flex: none;
    padding-top: 3px;
    background: #fafafa;
    border-bottom: 1px solid #c9c9c9;
}
.group {
    display: flex;
    flex-direction: column;
    background: linear-gradient(#bbb, #bbb) no-repeat 100% 0 / 1px 76px;
}
.group:last-child {
    background: none;
}
.group h2 {
    margin: 0;
    padding-right: 2px;
    font-size: 11px;
    line-height: 12px;
    font-weight: 400;
    text-align: center;
    color: #808080;
}
.group-body {
    height: 69px;
    font-size: 10px;
}
.cmds {
    display: flex;
    flex-direction: column;
}
.cmd {
    display: flex;
    align-items: center;
    gap: 4px;
    height: 21px;
    white-space: nowrap;
}
.cmd svg {
    width: 18px;
    height: 18px;
}
.off svg {
    opacity: 0.5;
}
.off,
.faint {
    color: #999;
}
.off .flip {
    transform: scaleX(-1);
}
.group-file {
    display: flex;
    padding-left: 17px;
}
.group-file .cmds {
    margin-top: -1px;
}
.save-btn {
    display: flex;
    flex-direction: column;
    align-items: center;
    gap: 8px;
    width: 32px;
    margin-right: 19px;
    padding-top: 5px;
}
.group-file .cmds + .cmds {
    margin-left: 11px;
}
.group-clip {
    padding-left: 5px;
}
.group-zoom {
    padding-left: 5px;
}
.group-font {
    padding: 6px 0 0 3px;
}
.font-row,
.style-row {
    display: flex;
    align-items: center;
}
.pick {
    position: relative;
    display: block;
    height: 22px;
}
.pick select {
    width: 100%;
    height: 100%;
    appearance: none;
    border: 1px solid #ddd;
    border-radius: 0;
    background: #fff;
    padding: 0 0 0 6px;
    font: 12px Roboto, sans-serif;
    color: #333;
}
.pick::after {
    content: "";
    position: absolute;
    right: 5px;
    top: 9px;
    width: 8px;
    height: 5px;
    background: #333;
    clip-path: polygon(0 0, 100% 0, 50% 100%);
    pointer-events: none;
}
.pick-font {
    width: 90px;
}
.pick-size {
    width: 50px;
    margin-right: 7px;
}
.align-btn {
    display: flex;
    align-items: center;
    justify-content: center;
    width: 26px;
    height: 22px;
}
.align-on {
    width: 24px;
    border: 1px solid #777;
    background: #efefef;
}
.style-row {
    height: 34px;
    color: #444;
    font-size: 14px;
}
.style-btn {
    width: 25px;
    padding-right: 8px;
}
.style-btn b {
    font-family: "Open Sans", sans-serif;
}
.style-btn i {
    font-family: "Liberation Serif", serif;
    font-size: 15px;
}
.style-btn:first-child {
    margin-left: 4px;
}
.style-btn u {
    font-weight: 700;
}
.rule {
    width: 1px;
    height: 21px;
    margin: 0 9px 0 -1px;
    background: #bbb;
}
.color-btn {
    display: flex;
    align-items: center;
    gap: 1px;
    width: 36px;
}
.ab {
    font: 700 11px "Open Sans", sans-serif;
    fill: #444;
}
.doc-a {
    font: 700 9px "Open Sans", sans-serif;
    fill: #3f7fc0;
}
.line {
    fill: none;
    stroke: #777;
}
.bold {
    fill: #fff;
    stroke: #777;
    stroke-width: 2px;
}
.dots {
    fill: none;
    stroke: #777;
    stroke-dasharray: 2 1;
}
.blue {
    fill: none;
    stroke: #4a80b8;
    stroke-width: 2px;
}
.tools,
.arrange,
.layouts {
    display: grid;
}
.tools svg,
.arrange svg,
.layouts svg {
    width: 18px;
    height: 18px;
}
.tools {
    grid-template-columns: repeat(7, 18px);
    grid-auto-rows: 18px;
    gap: 9px 7px;
    padding: 8px 0 0 8px;
}
.arrange {
    grid-template-columns: repeat(6, 18px);
    grid-auto-rows: 18px;
    gap: 3px 7px;
    padding: 1px 0 0 5px;
}
.layouts {
    grid-template-columns: 18px 18px;
    grid-auto-rows: 18px;
    gap: 3px 7px;
    padding: 1px 0 0 5px;
}
.group-diagram {
    padding-left: 2px;
}
.diagram-row {
    display: flex;
    margin-bottom: 1px;
}
.diagram-row .cmd {
    padding-left: 3px;
}
.diagram-row .cmd-grid {
    width: 84px;
}
.diagram-row .cmd-ruler {
    width: 74px;
}
.diagram-row .cmd-on {
    height: 22px;
    border: 1px solid #777;
    background: #efefef;
    width: 73px;
    padding-left: 2px;
}
.diagram-row .cmd-guide {
    width: 84px;
    margin-right: 1px;
}
.pick-flow {
    width: 157px;
    margin: 2px 0 0 1px;
}

/* canvas */
.canvas {
    flex: 1;
    min-height: 0;
    overflow: hidden;
}
.link path {
    fill: none;
    stroke: #3a2a40;
    stroke-dasharray: 9 3 2 2 2 3;
}
.tip {
    fill: #3a2a40;
}
.node-text {
    font: 15px "Liberation Sans", Arial, sans-serif;
    fill: #222;
    text-anchor: middle;
}
.node-text-left {
    text-anchor: start;
}
.ring {
    fill: url(#green);
    stroke: #118a11;
}
.ring-end {
    fill: #ffc0cb;
    stroke: #f00;
    stroke-width: 5px;
}
.task {
    fill: url(#cream);
    stroke: #cdaa7d;
}
.task-user {
    fill: url(#cream);
    stroke: #cdaa7d;
    stroke-width: 5px;
}
.glyph-light {
    fill: #fff;
    stroke: #111;
}
.glyph-dark {
    fill: #666;
    stroke: #111;
}

/* palette */
.palette-panel {
    width: 305px;
    flex: none;
    display: flex;
    flex-direction: column;
    margin-bottom: 21px;
    border: 1px solid #a9a9a9;
    border-right: 0;
    background: #f3f3f3;
}
.palette-head {
    display: flex;
    align-items: center;
    justify-content: flex-end;
    height: 54px;
    padding-right: 7px;
    background: #efefef;
    border-bottom: 1px solid #c9c9c9;
}
.palette {
    position: relative;
    flex: 1;
    display: flex;
    flex-direction: column;
    gap: 17px;
    padding: 15px 0 0 49px;
}
.palette-events,
.palette-tasks {
    display: flex;
    flex-direction: column;
    gap: 15px;
}
.palette-tasks {
    gap: 14px;
}
.shapes {
    display: grid;
    justify-items: center;
    align-items: start;
}
.cols-60-44 {
    grid-template-columns: 68px 60px 44px;
}
.cols-60-60 {
    grid-template-columns: 68px 60px 60px;
}
.cols-52-84 {
    grid-template-columns: 68px 52px 84px;
}
.cols-36-100 {
    grid-template-columns: 68px 36px 100px;
}
.cols-68-68 {
    grid-template-columns: 68px 68px 68px;
}
.cols-102 {
    grid-template-columns: 68px 102px;
}
.cols-84 {
    grid-template-columns: 68px 84px;
}
.shape {
    font: 13px/14px "Liberation Sans", Arial, sans-serif;
    color: #222;
    white-space: nowrap;
}
.shape > svg {
    width: 46px;
    height: 46px;
    margin: 0 auto 2px;
}
.shape-end {
    padding-bottom: 1px;
}
.shape-end > svg {
    margin-bottom: 4px;
}
.shape-task > svg {
    width: 60px;
    height: 40px;
    margin-bottom: 1px;
}
.shape-receive {
    margin-top: 4px;
}
.shape .task-user {
    stroke-width: 4px;
}
.scroll-thumb {
    position: absolute;
    right: 17px;
    top: 195px;
    width: 4px;
    height: 296px;
    background: #cfcfcf;
}
.overview {
    height: 183px;
    margin: 0 15px 14px;
    border: 1px solid #a9a9a9;
    background: #dcdcdc;
    overflow: hidden;
}
```
